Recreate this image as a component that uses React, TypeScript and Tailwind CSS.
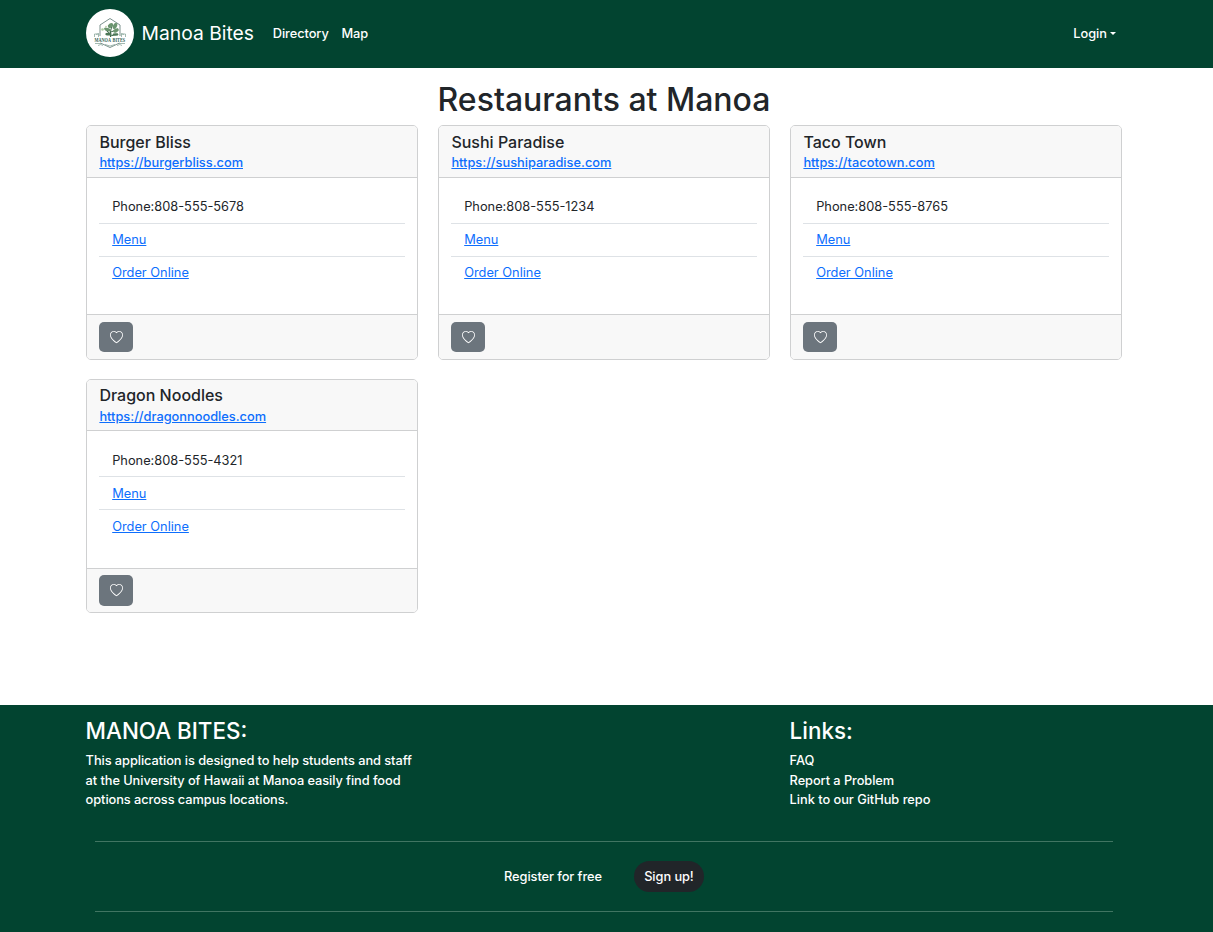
import { BsHeart } from 'react-icons/bs';

type Restaurant = { name: string; url: string; phone: string };

const restaurants: Restaurant[] = [
  { name: 'Burger Bliss', url: 'https://burgerbliss.com', phone: '808-555-5678' },
  { name: 'Sushi Paradise', url: 'https://sushiparadise.com', phone: '808-555-1234' },
  { name: 'Taco Town', url: 'https://tacotown.com', phone: '808-555-8765' },
  { name: 'Dragon Noodles', url: 'https://dragonnoodles.com', phone: '808-555-4321' },
];

function Logo() {
  return (
    <svg viewBox="0 0 48 48" className="size-12 shrink-0 overflow-visible">
      <circle cx="24" cy="24" r="24" fill="#fff" />
      <path d="M14 27V16L24 9.500l10 6.500V27M14.500 34l9.500 4.500 9.500-4.500" fill="none" stroke="#6c8580" strokeWidth=".9" />
      <path d="M24.500 28c-.5-4 .2-8 2-12M24.500 25l-6-5M25 23l7-3M24.500 27l7-2" fill="none" stroke="#3b6549" strokeWidth="1" />
      <g fill="#6b9570">
        <ellipse cx="24.500" cy="16.500" rx="3" ry="2" transform="rotate(-35 24.500 16.500)" />
        <ellipse cx="29" cy="17" rx="2" ry="3.200" transform="rotate(25 29 17)" />
        <ellipse cx="21.500" cy="20.500" rx="3.500" ry="1.500" transform="rotate(20 21.500 20.500)" />
        <ellipse cx="30" cy="21.500" rx="3" ry="1.800" transform="rotate(-25 30 21.500)" />
        <ellipse cx="22.500" cy="25" rx="3.200" ry="1.600" fill="#4b7757" />
        <ellipse cx="29.500" cy="25.500" rx="3" ry="1.300" fill="#4b7757" />
      </g>
      <circle cx="16.500" cy="20.500" r="1.300" fill="#a8cc9e" />
      <circle cx="20" cy="17.500" r=".8" fill="#b4c99c" />
      <path d="M8.500 28V25h4v3M35.500 28V25h4v3M10 25.500l3-1M38 25.500l-3-1M9 34.500h6M33 34.500h6M12 36.500q3-2 5 0M31 36.500q3-2 5 0M19 35.500q5 3 10 0" fill="none" stroke="#8aa79c" strokeWidth=".8" />
      <text transform="translate(8.500 33) scale(1 1.35)" wordSpacing=".8" fontFamily="Liberation Serif, serif" fontWeight="700" fontSize="4.250" fill="#345f56">MANOA BITES</text>
    </svg>
  );
}

function RestaurantCard({ name, url, phone }: Restaurant) {
  return (
    <article className="rounded-[5px] border border-[#cfd0d1] bg-white">
      <header className="rounded-t-[4px] border-b border-[#cfd0d1] bg-[#f8f8f8] px-[12.4px] pt-[6.5px] pb-[4.2px]">
        <h5 className="mb-[1.5px] text-[16px] font-medium leading-[19.2px]">{name}</h5>
        <a href={url} className="block text-[12.8px] font-medium leading-[19.2px] text-[#0d6efd] underline">{url}</a>
      </header>
      <div className="px-[12px] pt-[13px] pb-[25.5px] leading-[19.2px]">
        <div className="border-b border-[#dee2e6] px-[13.2px] py-[6.4px]">Phone:{phone}</div>
        <div className="border-b border-[#dee2e6] px-[13.2px] py-[6.4px]"><a href="#menu" className="text-[#0d6efd] underline">Menu</a></div>
        <div className="px-[13.2px] py-[6.4px]"><a href="#order" className="text-[#0d6efd] underline">Order Online</a></div>
      </div>
      <footer className="rounded-b-[4px] border-t border-[#cfd0d1] bg-[#f8f8f8] px-3 pt-[6.4px] pb-[6.7px]">
        <button aria-label="Favorite" className="flex h-[30.4px] w-[34px] items-center justify-center rounded-[5px] bg-[#6c757d] text-white">
          <BsHeart className="mt-px size-[13px]" />
        </button>
      </footer>
    </article>
  );
}

export default function App() {
  return (
    <div className="flex h-[932px] flex-col overflow-hidden bg-white font-['Inter',sans-serif] text-[12.8px] leading-[19.2px] text-[#212529]">
      <nav className="h-[68px] shrink-0 bg-[#024430] pr-[5px] text-white">
        <div className="mx-auto flex h-[66px] w-[1036px] items-center">
          <Logo />
          <span className="ml-[7.5px] w-[112px] whitespace-nowrap text-[19.3px] leading-[30px]">Manoa Bites</span>
          <a href="#directory" className="ml-[19.3px] mt-[2px] font-medium tracking-[-0.07px]">Directory</a>
          <a href="#map" className="ml-[12.8px] mt-[2px] font-medium tracking-[-0.07px]">Map</a>
          <button className="ml-auto mr-[6px] mt-[2px] flex items-center gap-[3px] font-medium">
            Login
            <span className="border-x-[3.500px] border-t-[3.500px] border-x-transparent border-t-white" />
          </button>
        </div>
      </nav>

      <main className="h-[637px] shrink-0 pt-[13.1px] pr-[5px]">
        <div className="mx-auto w-[1036px]">
          <h1 className="mb-[5.6px] text-center text-[32px] font-medium leading-[38.4px]">Restaurants at Manoa</h1>
          <div className="grid grid-cols-3 gap-x-5 gap-y-[19.1px]">
            {restaurants.map((r) => <RestaurantCard key={r.name} {...r} />)}
          </div>
        </div>
      </main>

      <footer className="grow bg-[#024430] pt-[12.8px] pr-[5px] font-medium tracking-[-0.065px] text-white">
        <div className="mx-auto grid w-[1036px] grid-cols-3 gap-x-5">
          <section className="-ml-[0.4px] leading-[19.5px]">
            <h3 className="mb-[6.4px] text-[22.4px] leading-[26.9px] tracking-normal">MANOA BITES:</h3>
            <p>This application is designed to help students and staff at the University of Hawaii at Manoa easily find food options across campus locations.</p>
          </section>
          <section className="col-start-3 -ml-[0.4px] leading-[19.5px]">
            <h3 className="mb-[6.4px] text-[22.4px] leading-[26.9px] tracking-normal">Links:</h3>
            <a href="#faq" className="block">FAQ</a>
            <a href="#report" className="block">Report a Problem</a>
            <a href="#github" className="block tracking-[-0.03px]">Link to our GitHub repo</a>
          </section>
        </div>
        <div className="mx-auto mt-[31.2px] flex h-[71px] w-[1018px] items-center justify-center gap-8 border-y border-[#417562]">
          <span>Register for free</span>
          <button className="h-[31px] w-[70px] rounded-full bg-[#212529]">Sign up!</button>
        </div>
      </footer>
    </div>
  );
}
